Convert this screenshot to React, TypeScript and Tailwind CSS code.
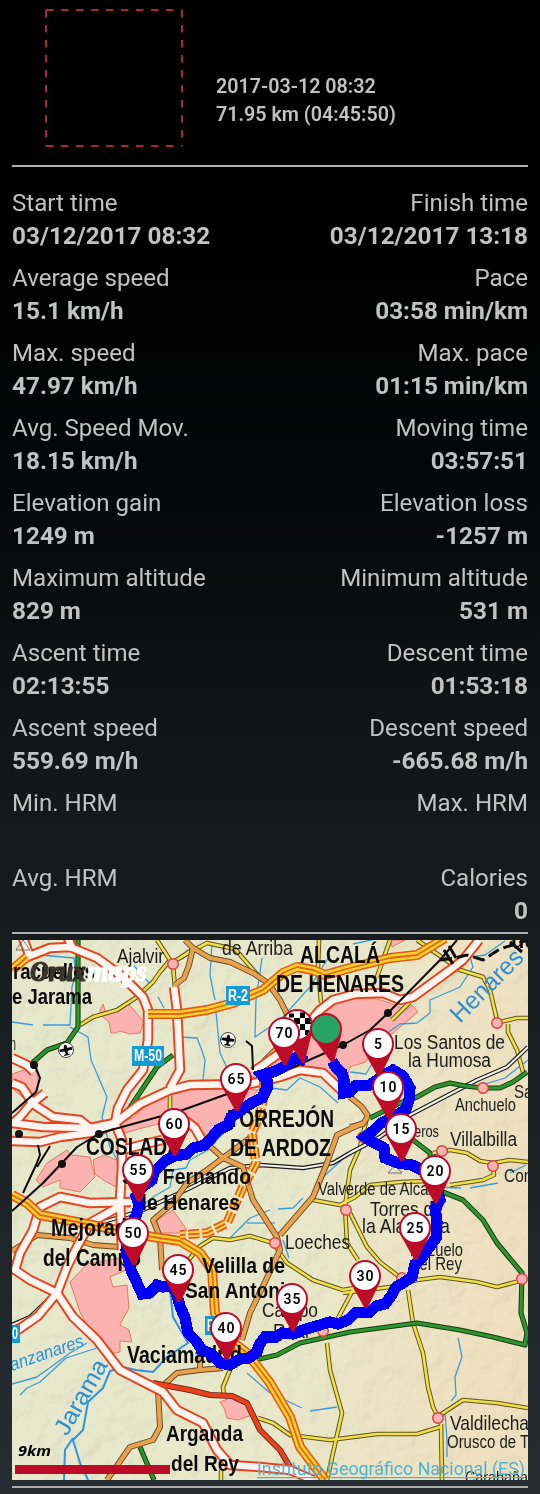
import { clsx } from "clsx";

type Stat = { label: string; value: string };

const stats: [Stat, Stat][] = [
  [{ label: "Start time", value: "03/12/2017 08:32" }, { label: "Finish time", value: "03/12/2017 13:18" }],
  [{ label: "Average speed", value: "15.1 km/h" }, { label: "Pace", value: "03:58 min/km" }],
  [{ label: "Max. speed", value: "47.97 km/h" }, { label: "Max. pace", value: "01:15 min/km" }],
  [{ label: "Avg. Speed Mov.", value: "18.15 km/h" }, { label: "Moving time", value: "03:57:51" }],
  [{ label: "Elevation gain", value: "1249 m" }, { label: "Elevation loss", value: "-1257 m" }],
  [{ label: "Maximum altitude", value: "829 m" }, { label: "Minimum altitude", value: "531 m" }],
  [{ label: "Ascent time", value: "02:13:55" }, { label: "Descent time", value: "01:53:18" }],
  [{ label: "Ascent speed", value: "559.69 m/h" }, { label: "Descent speed", value: "-665.68 m/h" }],
  [{ label: "Min. HRM", value: "" }, { label: "Max. HRM", value: "" }],
  [{ label: "Avg. HRM", value: "" }, { label: "Calories", value: "0" }],
];

// Built-up areas
const urban = [
  "100,1010 103,1004 106,1013 117,1010 124,1003 129,1004 137,1014 144,1022 140,1033 130,1034 120,1031 116,1033 111,1033 109,1022 100,1015",
  "320,1018 333,1003 350,999 370,997 387,1002 406,1010 412,1005 418,1012 393,1033 372,1050 366,1062 350,1067 345,1085 325,1073 300,1066 270,1076 250,1078 290,1050 306,1032",
  "134,1117 146,1105 162,1097 190,1090 225,1087 258,1090 235,1120 212,1142 200,1128 192,1122 178,1118 159,1124 142,1128 125,1133 122,1122",
  "47,1163 67,1150 72,1155 90,1157 95,1177 80,1192 60,1188 60,1180 43,1187 36,1180",
  "93,1160 104,1155 117,1160 118,1188 103,1180 95,1174",
  "12,1074 30,1068 38,1073 38,1090 28,1102 12,1088",
  "70,1282 87,1264 120,1258 126,1270 110,1277 113,1287 127,1285 129,1308 120,1325 129,1330 132,1342 120,1341 120,1352 110,1354 93,1337 80,1312",
  "157,1220 173,1210 187,1230 180,1233 160,1233",
  "220,1402 232,1397 247,1406 252,1415 238,1420 227,1418 224,1408",
  "390,940 405,940 392,947",
];

const rivers = [
  "12,1022 33,1025",
  "43,1025 70,1025 72,987 76,972 74,958 40,955",
  "70,1027 88,1037 91,1060 107,1097 102,1117 110,1147 120,1165",
  "134,966 150,984",
  "158,997 164,1008",
  "212,943 210,975 215,1000",
  "216,1012 220,1053 228,1070",
  "262,958 256,1000 255,1037 280,1020 310,987 330,955",
  "180,1037 197,1038 201,1048 205,1060 203,1080",
  "263,1087 287,1090 300,1078 320,1087 338,1103",
  "353,944 380,938",
  "505,941 485,955 470,957 473,967 460,987 430,1000 430,1013 417,1023 400,1024 380,1038 374,1060 366,1074 350,1072",
  "528,1060 505,1078 485,1084",
  "224,1132 208,1150 190,1160 186,1168 173,1170 170,1187 153,1197 142,1206",
  "230,1238 250,1218 270,1210",
  "278,1209 293,1208 303,1198",
  "247,1223 275,1223",
  "283,1240 289,1258",
  "342,1160 323,1177 322,1182",
  "435,1187 461,1188",
  "470,1188 498,1183",
  "510,1173 526,1165",
  "458,1338 462,1357 455,1377 456,1395 451,1401",
  "445,1413 447,1440 447,1457",
  "247,1373 270,1393",
  "285,1400 302,1408",
  "310,1411 337,1407",
  "12,1384 37,1377 70,1353 87,1343",
  "20,1395 27,1388 40,1382 66,1358 97,1348",
];

const bigRivers = ["170,1290 173,1317 188,1343 167,1357 153,1372 136,1370 123,1367 110,1371 103,1388 88,1402 83,1430 73,1440 80,1463 88,1480", "73,1438 65,1450 64,1480"];

const yellowRoads = [
  "157,940 170,960 160,972 153,982 137,997 117,1010 93,1017 80,1025",
  "173,962 190,952 207,943 235,949 262,980",
  "180,958 193,949",
  "173,965 175,988",
  "319,940 318,967 321,1003",
  "417,940 443,958 460,970 483,977 490,990 497,1020",
  "500,1022 517,1018 528,1018",
  "508,1024 508,1032 517,1050 523,1072",
  "390,940 377,977",
  "410,1002 392,1020",
  "433,1153 450,1150 467,1153 480,1161 493,1163 510,1160 528,1162",
  "493,1166 494,1175 483,1180 450,1185",
  "367,1117 360,1147 350,1170 345,1207 347,1243 358,1260",
  "313,1200 340,1205 355,1197 370,1185 400,1182 430,1181",
  "350,1213 367,1247 380,1262 402,1279",
  "343,1293 390,1287 417,1280 440,1277 477,1282 497,1287 523,1280",
  "187,1262 200,1246 213,1238 230,1240 250,1236 273,1243 287,1263 313,1280 343,1290 354,1288 337,1320",
  "327,1343 330,1370 342,1413 327,1480",
  "230,1370 223,1387 224,1396",
  "258,1418 273,1423 290,1435 330,1440 377,1434 417,1434 440,1427",
  "408,1290 413,1323 423,1353 428,1387 433,1407 438,1417",
  "528,1408 497,1403 463,1400 440,1415",
  "441,1424 442,1480",
  "170,1092 170,1110",
  "221,1470 221,1480",
];

const orangeRoads = [
  "185,940 193,948 210,958 230,962 253,973 268,983 280,1000 290,1020 280,1045 265,1060 257,1075",
  "193,948 189,965 184,978 175,985",
  "203,1140 223,1158 243,1167 253,1200 277,1237 280,1250 265,1282 250,1313 242,1340",
  "254,1135 223,1158 207,1170 187,1183 173,1203 153,1220 160,1237 162,1270",
  "363,1123 337,1135 327,1163 313,1197 280,1235",
  "350,1097 362,1107 368,1116 363,1124 350,1127",
  "12,1251 37,1235 70,1238 93,1245 120,1247",
  "223,1368 200,1370 177,1373 158,1390 160,1427 153,1440 130,1447 107,1480",
  "200,1371 200,1350",
];

const greenRoads = [
  "78,940 78,1027 67,1043 47,1050 30,1065",
  "173,1055 157,1067 133,1103 125,1115",
  "527,1072 513,1082 500,1088 483,1088 465,1086 450,1083 435,1087 417,1097 400,1103 370,1118",
  "413,1140 430,1153 432,1180 443,1192 463,1200 483,1220 497,1243 522,1273 521,1313 527,1333 525,1345 493,1337 460,1330 417,1323 350,1332 323,1338 300,1343 277,1355 255,1360",
  "140,1447 154,1480",
];

const redRoads = ["153,1383 190,1390 210,1395 232,1396 247,1403 260,1430 280,1450 290,1467 310,1482"];

const motorways = [
  "23,938 30,957",
  "68,938 73,950",
  "27,957 50,948 70,947 97,958 123,977 143,997 148,1010 148,1040 143,1070 127,1090 118,1108 115,1123 122,1140 122,1167 120,1200 122,1250",
  "174,987 177,1010 180,1070 170,1088",
  "115,1123 140,1104 170,1090 190,1085 250,1084 280,1077 300,1070 323,1073 343,1092",
  "253,1072 280,1053 303,1030 320,1010 333,1000 355,994 383,993 400,1000 413,997 450,970 463,960 479,940",
  "12,1058 27,1065 34,1072",
  "12,1083 22,1087 33,1104 53,1117 80,1120 90,1128 115,1123",
  "45,1093 30,1105 20,1117 13,1123",
  "12,1123 43,1127 90,1128",
  "12,1141 40,1142 60,1137 97,1132 115,1123",
  "131,1202 90,1203 60,1197 40,1207 33,1230 20,1253 15,1270 30,1280 57,1293 73,1317 97,1340 120,1370 163,1392 177,1410 203,1423 217,1450 230,1465 260,1467 290,1470 313,1480",
  "122,1205 90,1223 77,1247 67,1267 57,1293 38,1316 12,1334",
  "122,1150 145,1144 162,1140",
  "186,1121 195,1128 203,1142",
];

const tollRoads = [
  "12,970 27,957",
  "148,1014 180,1014 207,1010 233,1003 263,990 283,973 297,967 313,970 325,975 350,968 390,958 417,955 445,938",
  "12,1195 27,1203 40,1215 77,1222 117,1230 153,1237 180,1241 200,1253 212,1270 215,1313 230,1340 247,1353 270,1383 290,1417 300,1447 325,1480",
];

const underConstruction = ["264,1080 263,1100 260,1115 252,1133 256,1163 243,1187 227,1223 207,1233 180,1235"];

const twinRails = ["528,1047 507,1067 477,1080 410,1115 380,1137 350,1153 333,1163 303,1168 260,1165 230,1168 190,1188 143,1210 100,1223", "70,1258 53,1295 30,1317 12,1325"];

const rails = [
  "35,1066 40,1078 36,1092 12,1113",
  "280,1073 343,1045 370,1030 388,1013 440,960 457,940",
  "12,1211 43,1183 62,1163 77,1147 100,1133 180,1111 230,1093",
  "38,1145 40,1155 36,1165 23,1193",
  "50,1146 37,1167",
  "246,1041 252,1046 253,1070",
];

const stations: [number, number][] = [[34, 1065], [343, 1045], [388, 1013], [62, 1164], [19, 1134], [99, 1134]];

const towns: [number, number][] = [
  [173, 964], [497, 1023], [483, 1088], [442, 1151], [493, 1166], [275, 1243], [346, 1210], [522, 1279], [438, 1418], [323, 1331], [363, 1137], [402, 1278],
];

type Label = { t: string; x: number; y: number; w: number; s: number; b?: boolean };

const labels: Label[] = [
  { t: "de Arriba", x: 222, y: 955, w: 71, s: 19.5 },
  { t: "Ajalvir", x: 117, y: 963, w: 47, s: 20 },
  { t: "ALCALÁ", x: 300, y: 963, w: 80, s: 24, b: true },
  { t: "DE HENARES", x: 276, y: 992, w: 128, s: 24, b: true },
  { t: "racuellos", x: 13, y: 979, w: 82, s: 22, b: true },
  { t: "e Jarama", x: 12, y: 1004, w: 80, s: 22, b: true },
  { t: "Los Santos de", x: 394, y: 1049, w: 111, s: 20 },
  { t: "la Humosa", x: 408, y: 1067, w: 83, s: 20 },
  { t: "Anchuelo", x: 455, y: 1111, w: 61, s: 18 },
  { t: "Santorcaz", x: 514, y: 1098, w: 68, s: 18 },
  { t: "eros", x: 414, y: 1137, w: 25, s: 17 },
  { t: "Villalbilla", x: 450, y: 1146, w: 67, s: 20.5 },
  { t: "Corpa", x: 504, y: 1182, w: 42, s: 19 },
  { t: "Valverde de Alcalá", x: 318, y: 1195, w: 122, s: 18 },
  { t: "Torres de", x: 370, y: 1216, w: 73, s: 21 },
  { t: "la Alameda", x: 362, y: 1233, w: 88, s: 21 },
  { t: "Pozuelo", x: 410, y: 1256, w: 53, s: 19 },
  { t: "del Rey", x: 411, y: 1270, w: 51, s: 19 },
  { t: "Loeches", x: 285, y: 1249, w: 65, s: 20 },
  { t: "Campo", x: 262, y: 1317, w: 56, s: 20 },
  { t: "Real", x: 273, y: 1338, w: 36, s: 20 },
  { t: "n", x: 10, y: 1050, w: 6, s: 18 },
  { t: "TORREJÓN", x: 228, y: 1127, w: 106, s: 24, b: true },
  { t: "DE ARDOZ", x: 230, y: 1156, w: 101, s: 24, b: true },
  { t: "COSLADA", x: 86, y: 1155, w: 95, s: 24, b: true },
  { t: "San Fernando", x: 122, y: 1184, w: 129, s: 22, b: true },
  { t: "de Henares", x: 135, y: 1210, w: 105, s: 22, b: true },
  { t: "Mejorada", x: 51, y: 1236, w: 87, s: 23, b: true },
  { t: "del Campo", x: 43, y: 1266, w: 98, s: 23, b: true },
  { t: "Velilla de", x: 202, y: 1273, w: 83, s: 22.5, b: true },
  { t: "San Antonio", x: 185, y: 1298, w: 112, s: 22.5, b: true },
  { t: "Vaciamadrid", x: 127, y: 1363, w: 115, s: 23, b: true },
  { t: "Arganda", x: 166, y: 1441, w: 77, s: 22.5, b: true },
  { t: "del Rey", x: 171, y: 1471, w: 68, s: 22.5, b: true },
  { t: "Valdilecha", x: 450, y: 1430, w: 79, s: 21 },
  { t: "Orusco de Tajuña", x: 447, y: 1448, w: 117, s: 18 },
  { t: "Carabaña", x: 465, y: 1483, w: 63, s: 17 },
];

const track = "332,1061 337,1069 342,1073 344,1080 344,1093 350,1092 355,1086 370,1085 384,1075 393,1070 403,1076 410,1088 409,1100 406,1109 396,1116 380,1124 373,1131 365,1137 371,1141 384,1148 385,1158 398,1163 412,1165 422,1170 434,1174 440,1200 435,1208 437,1222 436,1238 428,1249 422,1258 415,1264 412,1277 403,1283 396,1287 391,1296 385,1304 376,1306 370,1312 355,1313 348,1320 338,1324 330,1322 313,1327 303,1330 293,1334 282,1333 276,1337 265,1337 259,1345 257,1352 249,1358 240,1359 230,1365 220,1363 212,1354 202,1350 196,1341 188,1333 185,1318 180,1306 176,1292 170,1286 163,1287 157,1285 150,1293 142,1294 137,1283 131,1270 126,1250 132,1225 137,1213 139,1205 136,1196 141,1188 152,1180 154,1172 165,1161 174,1156 187,1154 193,1148 205,1145 213,1136 218,1130 228,1125 231,1117 240,1111 250,1104 262,1098 267,1088 267,1081 262,1075 276,1071 285,1066 297,1057 306,1062";

const pins: [string, number, number][] = [
  ["5", 378, 1044], ["10", 388, 1087], ["15", 401, 1129], ["20", 435, 1171], ["25", 415, 1228],
  ["30", 365, 1276], ["35", 292, 1299], ["40", 226, 1328], ["45", 178, 1270],
  ["50", 133, 1233], ["55", 138, 1170], ["60", 174, 1124], ["65", 236, 1079], ["70", 284, 1033],
];

const Lines = ({ list, color, width, dash }: { list: string[]; color: string; width: number; dash?: string }) => (
  <g fill="none" stroke={color} strokeWidth={width} strokeDasharray={dash} strokeLinejoin="round">
    {list.map((points) => (
      <polyline key={points} points={points} />
    ))}
  </g>
);

const Pin = ({ label, x, y }: { label: string; x: number; y: number }) => (
  <g transform={`translate(${x} ${y})`}>
    <path d="M-15.5 5 L-0.5 32 L2.5 32 L15.5 5Z" fill="#bc0c28" />
    <circle r="15" fill="#fff" stroke="#bc0c28" strokeWidth="2" />
    <text x="0.5" y="5" textAnchor="middle" fontSize="14" fontWeight="600" fontFamily="Roboto, sans-serif" letterSpacing="1" fill="#000">
      {label}
    </text>
  </g>
);

const Airport = ({ x, y, angle = 0 }: { x: number; y: number; angle?: number }) => (
  <g transform={`translate(${x} ${y}) rotate(${angle})`}>
    <circle r="7.5" fill="#fff" stroke="#222" strokeWidth="0.8" />
    <path d="M0 -5.5 L1.6 -4 L1.6 -2 L6.4 -1.6 L6.4 0.8 L1.6 1.2 L1 4 L3 4.4 L3 5.6 L-3 5.6 L-3 4.4 L-1 4 L-1.6 1.2 L-6.4 0.8 L-6.4 -1.6 L-1.6 -2 L-1.6 -4Z" fill="#000" />
  </g>
);

const RouteMap = () => (
  <svg viewBox="12 940 516 540" className="block h-[540px] w-full" fontFamily='"Liberation Sans", Arial, sans-serif'>
    <defs>
      <linearGradient id="land" x1="0" y1="0" x2="1" y2="0.15">
        <stop offset="0" stopColor="#e6e8cd" />
        <stop offset="0.6" stopColor="#e9e8cb" />
        <stop offset="1" stopColor="#efe1c0" />
      </linearGradient>
      <filter id="relief" x="0" y="0" width="100%" height="100%">
        <feTurbulence type="fractalNoise" baseFrequency="0.035" numOctaves="4" seed="7" />
        <feDiffuseLighting surfaceScale="3.2" lightingColor="#ffffff" diffuseConstant="1.15">
          <feDistantLight azimuth="225" elevation="58" />
        </feDiffuseLighting>
      </filter>
    </defs>
    <rect x="12" y="940" width="516" height="540" fill="url(#land)" />
    <rect x="12" y="940" width="516" height="540" filter="url(#relief)" opacity="0.32" className="mix-blend-multiply" />

    <g fill="#fab3b0" stroke="#e0664e" strokeWidth="0.8">
      {urban.map((points) => (
        <polygon key={points} points={points} />
      ))}
    </g>
    <Lines list={rivers} color="#3d9ade" width={1.3} />
    <Lines list={bigRivers} color="#2f93df" width={2} />

    <Lines list={yellowRoads} color="#5d5420" width={4.6} />
    <Lines list={yellowRoads} color="#f2e04a" width={2.6} />
    <Lines list={twinRails} color="#1c1c1c" width={4.4} />
    <Lines list={twinRails} color="#f4f4ee" width={2} />
    <Lines list={orangeRoads} color="#5f4a22" width={6} />
    <Lines list={orangeRoads} color="#e9a150" width={4.2} />
    <Lines list={greenRoads} color="#173d12" width={5.2} />
    <Lines list={greenRoads} color="#2f9430" width={3.2} />
    <Lines list={redRoads} color="#5e1a10" width={6} />
    <Lines list={redRoads} color="#e8421c" width={4.4} />
    <Lines list={motorways} color="#e8431f" width={10.5} />
    <Lines list={motorways} color="#fff6f2" width={6.6} />
    <Lines list={tollRoads} color="#e6581a" width={10} />
    <Lines list={tollRoads} color="#fbd32c" width={6.8} />
    <Lines list={tollRoads} color="#e8641c" width={1.8} />
    <Lines list={underConstruction} color="#e8581a" width={9.5} dash="11 3" />
    <Lines list={underConstruction} color="#fbd84a" width={6} dash="11 3" />
    <Lines list={underConstruction} color="#e8581a" width={1.8} dash="11 3" />
    <Lines list={rails} color="#0c0c0c" width={2} />
    <Lines list={["440,960 455,958 467,955 483,960 500,949 528,940"]} color="#0c0c0c" width={3} dash="12 5" />
    <path d="M444 950 L453 964 M449 946 L456 958 M510 942 L522 952" stroke="#0c0c0c" strokeWidth="3" />

    {stations.map(([x, y]) => (
      <circle key={`${x}-${y}`} cx={x} cy={y} r="4" fill="#111" />
    ))}
    {towns.map(([x, y]) => (
      <circle key={`${x}-${y}`} cx={x} cy={y} r="5.3" fill="#f9b3b2" stroke="#dc3f3f" strokeWidth="1.4" />
    ))}
    <path d="M388 1173 L402 1173 L395 1165Z M16 950 L30 950 L23 940Z" fill="none" stroke="#555" strokeWidth="0.8" />
    <Airport x={66} y={1050} angle={-12} />
    <Airport x={228} y={1040} angle={8} />

    <g fill="#129bd5">
      <rect x="132" y="1046" width="32" height="20" />
      <rect x="226" y="986" width="24" height="19" />
      <rect x="12" y="1325" width="8" height="18" />
      <rect x="205" y="1316" width="20" height="19" />
    </g>
    <g fill="#fff" fontWeight="700" fontSize="16">
      <text x="134" y="1061" textLength="28" lengthAdjust="spacingAndGlyphs">M-50</text>
      <text x="228" y="1001" textLength="20" lengthAdjust="spacingAndGlyphs">R-2</text>
      <text x="12" y="1339" textLength="6" lengthAdjust="spacingAndGlyphs">0</text>
      <text x="207" y="1331" textLength="16" lengthAdjust="spacingAndGlyphs">R-3</text>
    </g>

    <g fill="#2b8fd8">
      <text transform="translate(460 1024) rotate(-45)" fontSize="25" textLength="92" lengthAdjust="spacingAndGlyphs">Henares</text>
      <text transform="translate(12 1371) rotate(-19)" fontSize="18" fontStyle="italic" textLength="77" lengthAdjust="spacingAndGlyphs">anzanares</text>
      <text transform="translate(67 1437) rotate(-60)" fontSize="24" textLength="83" lengthAdjust="spacingAndGlyphs">Jarama</text>
    </g>

    {labels.map((l) => (
      <text
        key={`${l.t}-${l.y}`}
        x={l.x}
        y={l.y}
        fontSize={l.s}
        fontWeight={l.b ? 700 : 400}
        textLength={l.w}
        lengthAdjust="spacingAndGlyphs"
        fill={l.b ? "#0a0a0a" : "#1c1c1c"}
      >
        {l.t}
      </text>
    ))}
    <text x="511" y="948" fontSize="22" fontWeight="700" fill="#111">uq</text>

    {/* watermark */}
    <g fontFamily='"Liberation Serif", serif' fontStyle="italic" fontWeight="700" fontSize="29">
      <text x="30" y="981" fill="#3a332e" stroke="#3a332e" strokeWidth="1.2" textLength="56" lengthAdjust="spacingAndGlyphs">Orux</text>
      <text x="87" y="981" fill="#fff" stroke="#fff" strokeWidth="1.2" textLength="60" lengthAdjust="spacingAndGlyphs">maps</text>
    </g>

    <polyline points={track} fill="none" stroke="#0000fa" strokeWidth="11.2" shapeRendering="crispEdges" />

    {/* finish flag */}
    <g transform="translate(297 1025)">
      <path d="M-15.5 5 L5 38 L7.5 38 L15.5 5Z" fill="#bc0c28" />
      <circle r="15" fill="#fff" stroke="#bc0c28" strokeWidth="2" />
      <path d="M-8 -11.5 h5 v4 h-5z M3 -12.5 h5 v5.5 h-5z M-3 -7 h6 v6 h-6z M8 -7 h4.5 l1.5 6 h-6z M3 -1 h5 v6 h-5z M8 5 h5 l-3 5 h-2z M-3 5 h6 v6 h-6z" fill="#000" />
    </g>
    <g transform="translate(326 1029)">
      <path d="M-15.5 5 L5 33 L8 33 L15.5 5Z" fill="#bc0c28" />
      <circle r="15" fill="#27a363" stroke="#bc0c28" strokeWidth="2" />
    </g>
    {pins.map(([label, x, y]) => (
      <Pin key={label} label={label} x={x} y={y} />
    ))}

    <text x="18" y="1456" fontFamily='"Open Sans", sans-serif' fontStyle="italic" fontWeight="700" fontSize="14" textLength="33" lengthAdjust="spacingAndGlyphs">9km</text>
    <rect x="15" y="1465" width="155" height="9" fill="#bd0a27" />
    <g fill="#4eb2d1" fontFamily="Roboto, sans-serif" fontSize="18.5">
      <text x="257" y="1475" textLength="268" lengthAdjust="spacingAndGlyphs">Instituto Geográfico Nacional (ES)</text>
      <rect x="257" y="1477" width="268" height="1.2" />
    </g>
  </svg>
);

const StatCell = ({ stat, right }: { stat: Stat; right?: boolean }) => (
  <div className={clsx("flex flex-col", right && "items-end")}>
    <span className="h-[33px] text-[24.1px] leading-[33px]">{stat.label}</span>
    <span className="h-[33px] text-[24.3px] leading-[31px] font-bold">{stat.value}</span>
  </div>
);

export default function App() {
  return (
    <div className="flex h-[1494px] w-[540px] flex-col overflow-hidden bg-gradient-to-b from-black via-[#121618] to-[#252d32] px-3 font-[Roboto,sans-serif] text-[#c2c2c2]">
      <header className="flex h-[165px] shrink-0 items-start">
        <svg className="mt-[9px] ml-[33px] h-[138px] w-[138px] shrink-0" viewBox="0 0 138 138" fill="none" stroke="#ab2733" strokeWidth="2">
          <path d="M1 1H137M137 1V137M1 1V137M1 137H137" strokeDasharray="7.5 7.5" />
        </svg>
        <div className="mt-[73px] ml-[33px] text-[19.7px] leading-[28px] font-semibold">
          <div>2017-03-12 08:32</div>
          <div>71.95 km (04:45:50)</div>
        </div>
      </header>
      <div className="h-[2px] shrink-0 bg-[#adadad]" />

      <section className="mt-5 flex h-[745px] shrink-0 flex-col gap-[9px]">
        {stats.map(([left, right]) => (
          <div key={left.label} className="flex justify-between">
            <StatCell stat={left} />
            <StatCell stat={right} right />
          </div>
        ))}
      </section>

      <div className="h-[2px] shrink-0 bg-[#adadad]" />
      <div className="mt-1.5 shrink-0">
        <RouteMap />
      </div>
      <div className="mt-1.5 h-[2px] shrink-0 bg-[#adadad]" />
    </div>
  );
}
